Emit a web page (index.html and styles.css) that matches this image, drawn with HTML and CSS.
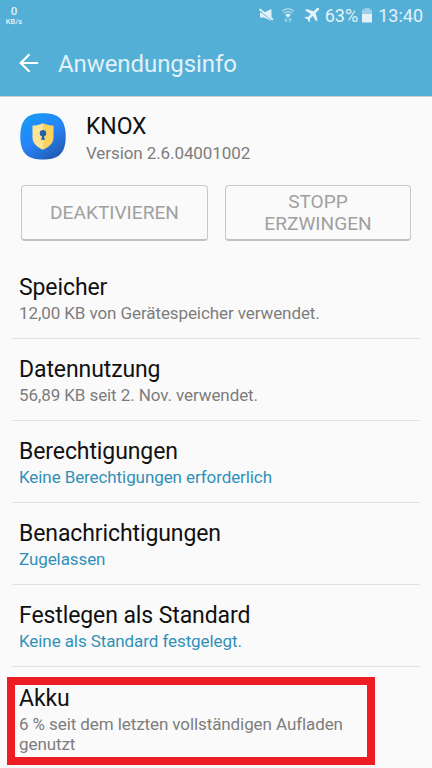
FILE: index.html
```html
<!DOCTYPE html>
<html lang="de">
<head>
<meta charset="utf-8">
<title>Anwendungsinfo</title>
<link rel="stylesheet" href="styles.css">
</head>
<body>
<header class="top">
  <div class="status">
    <div class="speed"><b>0</b><span>KB/s</span></div>
    <div class="indicators">
      <svg class="mute" width="15" height="16" viewBox="0 0 15 16"><path d="M1 5.500h4L12.500 2v12L5 10.500H1z" fill="currentColor"/><path d="M0 3.600 15 15" stroke="#53afd6" stroke-width="1"/><path d="M.5 2.200 14 12.800" stroke="currentColor" stroke-width="1.800"/></svg>
      <svg class="wifi" width="14" height="16" viewBox="0 0 14 16" fill="none" stroke="currentColor" stroke-width="1.200"><path d="M1 4.300Q7-1.200 13 4.300M2.800 6.500Q7 2.600 11.200 6.500" opacity=".65"/><path d="M4.300 8Q7 5.700 9.700 8L7 10.800z" fill="currentColor" stroke="none"/><path d="M5 11v3M3.800 12.800 5 14.300l1.200-1.500M9 15v-3M7.800 13.200 9 11.700l1.200 1.500" opacity=".55"/></svg>
      <svg class="plane" width="16" height="16" viewBox="0 0 16 16"><path d="M14.800 1.100c-.7-.6-1.700-.4-2.500.4L9.700 4.200 2.600 2.100 1.200 3.500l5.600 3.600-2.900 3-2.400-.3-1 .9 3 1.600 1.600 3 1-.9-.3-2.500 3-2.900 3.500 5.600 1.300-1.300-2-7.200 2.700-2.600c.8-.8 1.100-1.800.5-2.400z" fill="currentColor"/></svg>
      <span class="percent">63%</span>
      <svg class="battery" width="10" height="15" viewBox="0 0 10 15" fill="currentColor"><path d="M2.500 0h5v1.500H10V6H0V1.500h2.500z" opacity=".5"/><path d="M0 6h10v8.500H0z"/></svg>
      <span class="clock">13:40</span>
    </div>
  </div>
  <div class="bar">
    <svg class="back" width="20" height="20" viewBox="0 0 20 20" fill="none" stroke="#fff" stroke-width="2.200"><path d="M19.200 10H2M10.500 1.200 1.700 10l8.800 8.800"/></svg>
    <h1>Anwendungsinfo</h1>
  </div>
</header>
<main>
  <section class="app">
    <svg width="46" height="47" viewBox="0 0 46 47">
      <defs><linearGradient id="tile" x1=".15" y1="0" x2=".8" y2="1"><stop offset="0" stop-color="#149bf6"/><stop offset=".5" stop-color="#2784fa"/><stop offset="1" stop-color="#2259ad"/></linearGradient></defs>
      <path d="M23 .3C37.500.3 45.700 5.500 45.700 23.500S37.500 46.500 23 46.500.3 41.500.3 23.500 8.500.3 23 .3z" fill="url(#tile)"/>
      <path d="M23 10.200c3.500 1.600 7 2.300 10.500 2.300v12c0 6-4.500 9.500-10.500 12.300z" fill="#fbd25d"/>
      <path d="M23 10.200c-3.500 1.600-7 2.300-10.500 2.300v12c0 6 4.500 9.500 10.500 12.300z" fill="#fde396"/>
      <circle cx="23" cy="20.300" r="3.200" fill="#1f62a9"/><path d="M22 21h2v3l1.200 2.800h-4.400L22 24z" fill="#1f62a9"/>
    </svg>
    <div class="ident"><h2>KNOX</h2><p>Version 2.6.04001002</p></div>
  </section>
  <div class="actions">
    <button disabled>DEAKTIVIEREN</button>
    <button disabled>STOPP<br>ERZWINGEN</button>
  </div>
  <ul class="list">
    <li><h2>Speicher</h2><p>12,00 KB von Gerätespeicher verwendet.</p></li>
    <li><h2>Datennutzung</h2><p>56,89 KB seit 2. Nov. verwendet.</p></li>
    <li><h2>Berechtigungen</h2><p class="link">Keine Berechtigungen erforderlich</p></li>
    <li><h2>Benachrichtigungen</h2><p class="link">Zugelassen</p></li>
    <li><h2>Festlegen als Standard</h2><p class="link">Keine als Standard festgelegt.</p></li>
    <li class="marked"><h2>Akku</h2><p>6 % seit dem letzten vollständigen Aufladen genutzt</p></li>
  </ul>
</main>
</body>
</html>
```
FILE: styles.css
```css
* { box-sizing: border-box; margin: 0; padding: 0; }
body {
  width: 432px;
  height: 768px;
  overflow: hidden;
  background: #fafafa;
  color: #111;
  font-family: Roboto, sans-serif;
}
h1, h2 { font-weight: 400; }
svg { display: block; flex: none; }
.top { height: 97px; background: #53afd6; border-bottom: 1px solid #c9cfd2; }
.status { display: flex; justify-content: space-between; height: 32px; padding: 0 9px 0 5px; color: #e3f2f9; }
.speed { display: flex; flex-direction: column; align-items: center; width: 18px; padding-top: 5px; }
.speed b { font-size: 11.5px; line-height: 12px; font-weight: 500; }
.speed span { font-size: 7.5px; line-height: 9px; font-weight: 500; }
.indicators { display: flex; align-items: center; height: 30px; font-size: 18px; }
.mute { margin-right: -1px; }
.wifi { margin-left: 8px; }
.plane { margin-left: 9px; }
.percent { margin-left: 5px; }
.battery { margin-left: 4px; }
.clock { margin-left: 6px; }
.bar { display: flex; align-items: center; height: 62px; padding-left: 19px; }
.bar h1 { margin-left: 19px; padding-top: 1px; font-size: 24px; letter-spacing: -0.08px; line-height: 30px; color: #e1f1f8; }
.app { display: flex; height: 88px; padding: 16px 0 0 20px; }
.ident { margin-left: 20px; }
h2 { font-size: 23px; letter-spacing: -0.1px; line-height: 28px; white-space: nowrap; }
p { margin-top: 1px; font-size: 17px; letter-spacing: -0.09px; line-height: 20px; color: #7d7d7d; }
.ident h2 { line-height: 28px; }
.ident p { margin-top: 2px; }
.actions { display: grid; grid-template-columns: 187px 186px; gap: 17px; padding-left: 21px; }
button {
  height: 56px;
  border: 1px solid #c8c8c8;
  border-bottom: 2px solid #c2c2c2;
  border-radius: 4px;
  background: #fafafa;
  color: #a0a0a0;
  font: 400 19.1px/22px Roboto, sans-serif;
}
.list { list-style: none; margin-top: 16px; }
li { height: 82px; margin: 0 12px; padding: 17px 0 0 7px; border-bottom: 1px solid #e1e1e1; }
li.marked { width: 368px; height: 88px; margin: 10px 0 0 7px; padding: 0 0 0 4px; border: 8px solid #ee1c23; }
.link { color: #3190b8; }
```
